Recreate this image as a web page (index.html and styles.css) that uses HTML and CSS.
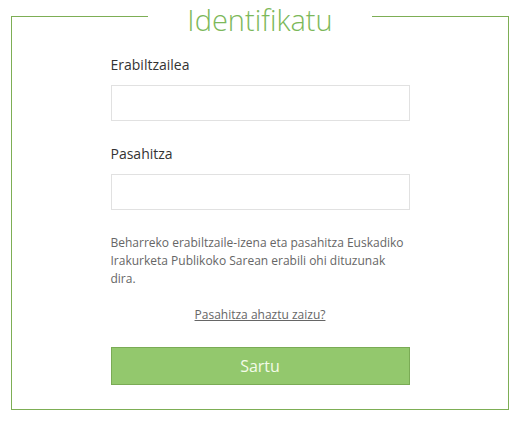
FILE: index.html
```html
<!DOCTYPE html>
<html>
<head>
<meta charset="utf-8">
<link rel="stylesheet" href="styles.css">
</head>
<body>
<section class="card">
  <header class="head">
    <span class="line line-left"></span>
    <h1 class="title">Identifikatu</h1>
    <span class="line line-right"></span>
  </header>
  <div class="panel">
    <form class="form">
      <label class="field">
        <span class="label">Erabiltzailea</span>
        <input class="input" type="text">
      </label>
      <label class="field">
        <span class="label">Pasahitza</span>
        <input class="input" type="password">
      </label>
      <p class="help">Beharreko erabiltzaile-izena eta pasahitza Euskadiko Irakurketa Publikoko Sarean erabili ohi dituzunak dira.</p>
      <a class="forgot" href="#">Pasahitza ahaztu zaizu?</a>
      <button class="submit" type="button">Sartu</button>
    </form>
  </div>
</section>
</body>
</html>
```
FILE: styles.css
```css
html, body {
  margin: 0;
  padding: 0;
  background: #fff;
}
body {
  padding: 0 16px 0 11px;
  font-family: "Open Sans", "Noto Sans", sans-serif;
}
.card {
  width: 498px;
}
.head {
  display: flex;
  height: 40px;
}
.line {
  flex: 1;
  align-self: flex-end;
  height: 24px;
  box-sizing: border-box;
  border-top: 1px solid #7dae55;
}
.line-left {
  border-left: 1px solid #7dae55;
}
.line-right {
  border-right: 1px solid #7dae55;
}
.title {
  margin: 0;
  padding: 0 39px;
  font-size: 29px;
  font-weight: 300;
  line-height: 40px;
  color: #7cb85a;
}
.panel {
  border: 1px solid #7dae55;
  border-top: none;
  padding: 0 0 24px;
}
.form {
  width: 299px;
  margin: 0 auto;
  display: flex;
  flex-direction: column;
  padding-top: 15px;
}
.field {
  display: flex;
  flex-direction: column;
  margin-bottom: 23px;
}
.label {
  font-size: 14px;
  line-height: 20px;
  color: #333;
  margin-bottom: 10px;
}
.input {
  height: 36px;
  box-sizing: border-box;
  border: 1px solid #e1e1e1;
  margin: 0;
  padding: 0 8px;
  outline: none;
}
.help {
  margin: 1px 0 0;
  font-size: 12px;
  line-height: 18px;
  color: #666;
}
.forgot {
  align-self: center;
  margin-top: 18px;
  font-size: 12px;
  line-height: 18px;
  color: #666;
  text-decoration: underline;
}
.submit {
  margin-top: 23px;
  height: 38px;
  border: 1px solid #7aab55;
  background: #93c86d;
  color: #f3fbe8;
  font-family: inherit;
  font-size: 16px;
  cursor: pointer;
}
```
